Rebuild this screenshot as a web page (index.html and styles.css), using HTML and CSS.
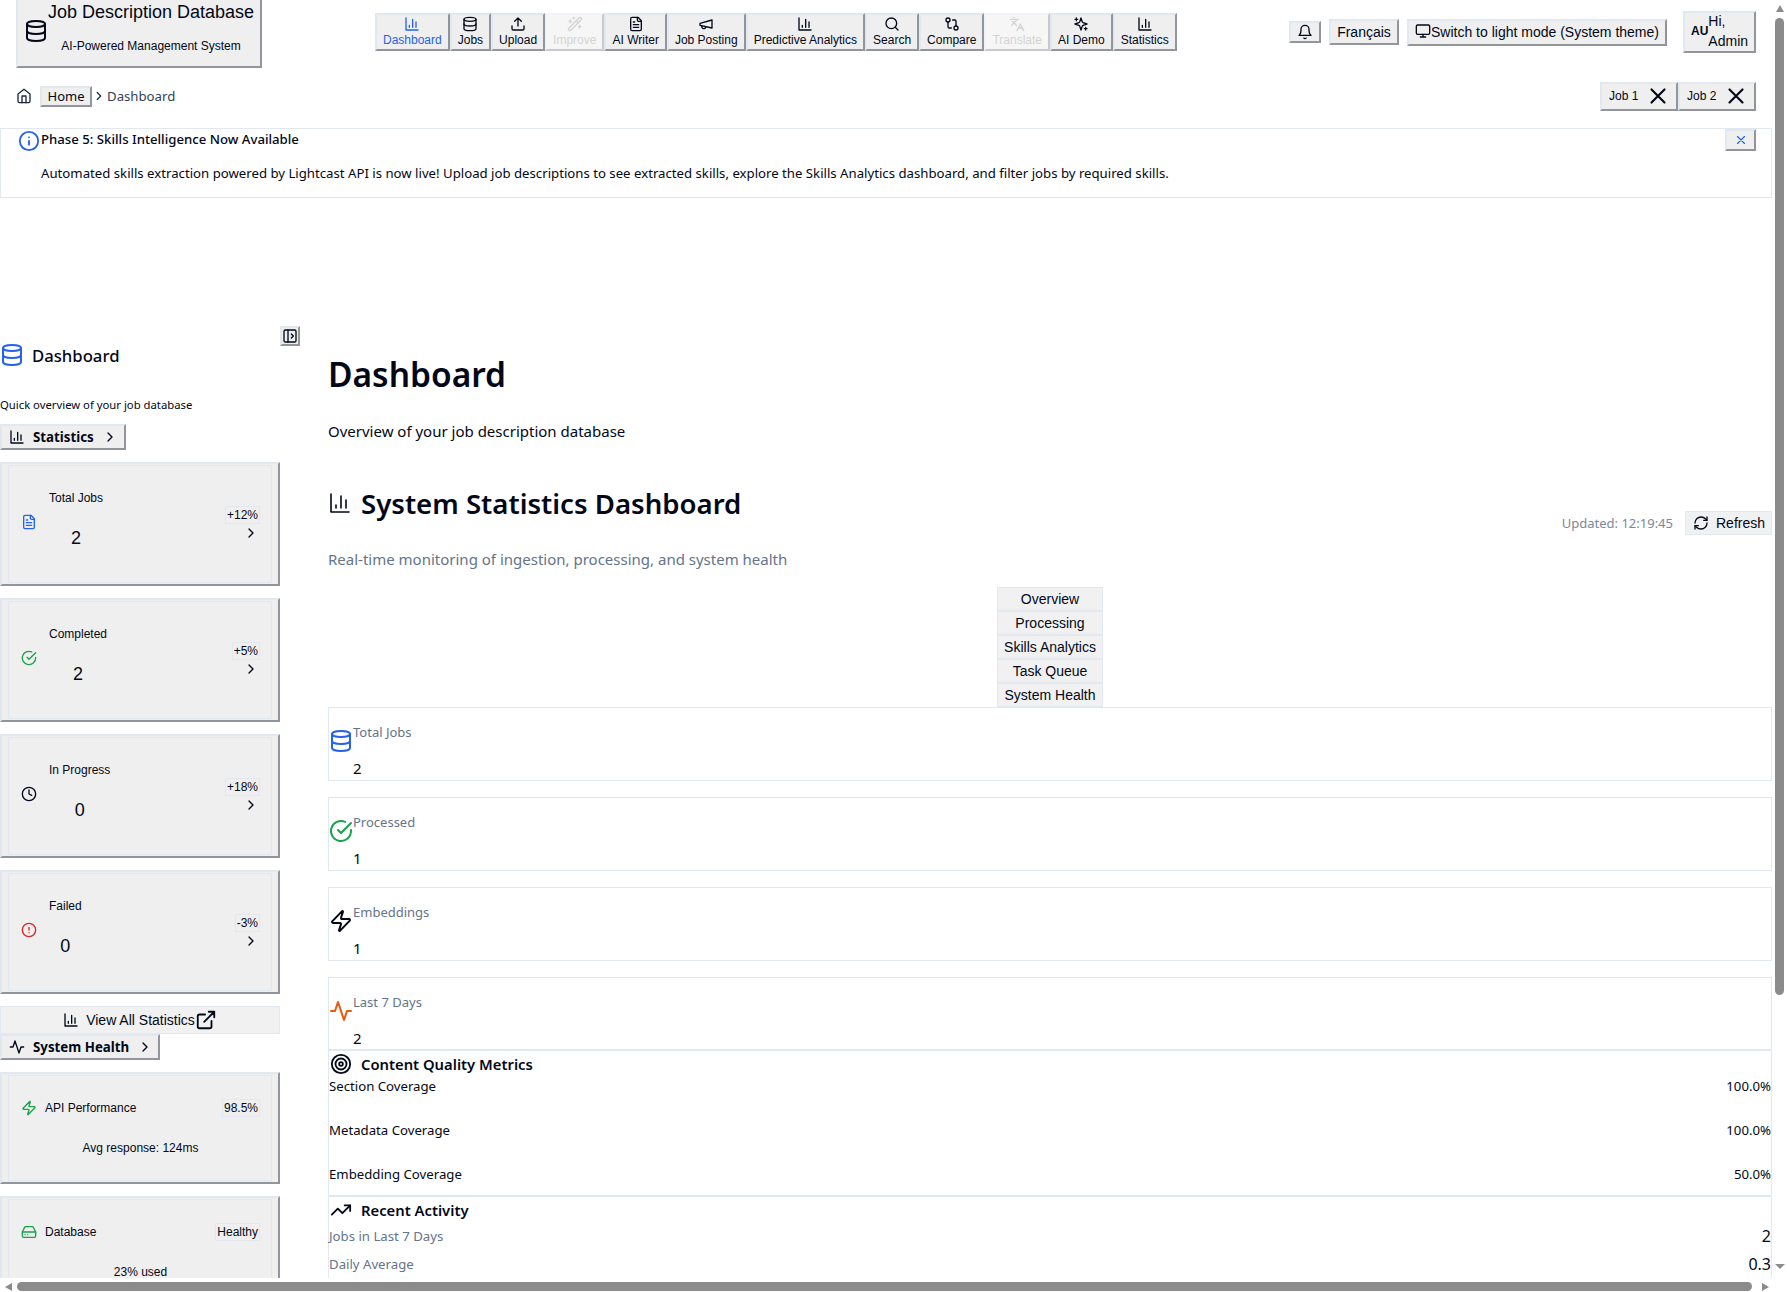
FILE: index.html
```html
<!DOCTYPE html>
<html lang="en">
<head>
    <meta charset="UTF-8">
    <meta name="viewport" content="width=device-width, initial-scale=1.0">
    <title>Job Description Database</title>
    <link rel="stylesheet" href="styles.css">
</head>
<body>
    <!-- icon sprite -->
    <svg class="sprite" xmlns="http://www.w3.org/2000/svg">
        <symbol id="i-chart" viewBox="0 0 24 24"><path d="M3 3v18h18M18 17V9M13 17V5M8 17v-3"/></symbol>
        <symbol id="i-db" viewBox="0 0 24 24"><ellipse cx="12" cy="5" rx="9" ry="3"/><path d="M3 5V19A9 3 0 0 0 21 19V5"/><path d="M3 12A9 3 0 0 0 21 12"/></symbol>
        <symbol id="i-upload" viewBox="0 0 24 24"><path d="M21 15v4a2 2 0 0 1-2 2H5a2 2 0 0 1-2-2v-4"/><path d="M17 8 12 3 7 8M12 3v12"/></symbol>
        <symbol id="i-wand" viewBox="0 0 24 24"><path d="m21.64 3.64-1.28-1.28a1.21 1.21 0 0 0-1.72 0L2.36 18.64a1.21 1.21 0 0 0 0 1.72l1.28 1.28a1.2 1.2 0 0 0 1.72 0L21.64 5.36a1.2 1.2 0 0 0 0-1.72"/><path d="m14 7 3 3M5 6v4M19 14v4M10 2v2M7 8H3M21 16h-4M11 3H9"/></symbol>
        <symbol id="i-file" viewBox="0 0 24 24"><path d="M15 2H6a2 2 0 0 0-2 2v16a2 2 0 0 0 2 2h12a2 2 0 0 0 2-2V7Z"/><path d="M14 2v4a2 2 0 0 0 2 2h4M10 9H8M16 13H8M16 17H8"/></symbol>
        <symbol id="i-megaphone" viewBox="0 0 24 24"><path d="m3 11 18-5v12L3 14v-3z"/><path d="M11.6 16.8a3 3 0 1 1-5.8-1.6"/></symbol>
        <symbol id="i-search" viewBox="0 0 24 24"><circle cx="11" cy="11" r="8"/><path d="m21 21-4.3-4.3"/></symbol>
        <symbol id="i-compare" viewBox="0 0 24 24"><circle cx="18" cy="18" r="3"/><circle cx="6" cy="6" r="3"/><path d="M13 6h3a2 2 0 0 1 2 2v7M11 18H8a2 2 0 0 1-2-2V9"/></symbol>
        <symbol id="i-lang" viewBox="0 0 24 24"><path d="m5 8 6 6M4 14l6-6 2-3M2 5h12M7 2h1M22 22l-5-10-5 10M14 18h6"/></symbol>
        <symbol id="i-sparkles" viewBox="0 0 24 24"><path d="m12 3-1.912 5.813a2 2 0 0 1-1.275 1.275L3 12l5.813 1.912a2 2 0 0 1 1.275 1.275L12 21l1.912-5.813a2 2 0 0 1 1.275-1.275L21 12l-5.813-1.912a2 2 0 0 1-1.275-1.275L12 3Z"/><path d="M5 3v4M19 17v4M3 5h4M17 19h4"/></symbol>
        <symbol id="i-bell" viewBox="0 0 24 24"><path d="M6 8a6 6 0 0 1 12 0c0 7 3 9 3 9H3s3-2 3-9"/><path d="M10.3 21a1.94 1.94 0 0 0 3.4 0"/></symbol>
        <symbol id="i-monitor" viewBox="0 0 24 24"><rect x="2" y="3" width="20" height="14" rx="2"/><path d="M8 21h8M12 17v4"/></symbol>
        <symbol id="i-x" viewBox="0 0 24 24"><path d="M18 6 6 18M6 6l12 12"/></symbol>
        <symbol id="i-home" viewBox="0 0 24 24"><path d="m3 9 9-7 9 7v11a2 2 0 0 1-2 2H5a2 2 0 0 1-2-2z"/><path d="M9 22V12h6v10"/></symbol>
        <symbol id="i-chevron" viewBox="0 0 24 24"><path d="m9 18 6-6-6-6"/></symbol>
        <symbol id="i-info" viewBox="0 0 24 24"><circle cx="12" cy="12" r="10"/><path d="M12 16v-4M12 8h.01"/></symbol>
        <symbol id="i-panel" viewBox="0 0 24 24"><rect x="3" y="3" width="18" height="18" rx="2"/><path d="M9 3v18M14 9l3 3-3 3"/></symbol>
        <symbol id="i-check" viewBox="0 0 24 24"><path d="M22 11.08V12a10 10 0 1 1-5.93-9.14"/><path d="M22 4 12 14.01l-3-3"/></symbol>
        <symbol id="i-clock" viewBox="0 0 24 24"><circle cx="12" cy="12" r="10"/><path d="M12 6v6l4 2"/></symbol>
        <symbol id="i-alert" viewBox="0 0 24 24"><circle cx="12" cy="12" r="10"/><path d="M12 8v4M12 16h.01"/></symbol>
        <symbol id="i-activity" viewBox="0 0 24 24"><path d="M22 12h-4l-3 9L9 3l-3 9H2"/></symbol>
        <symbol id="i-zap" viewBox="0 0 24 24"><path d="M4 14a1 1 0 0 1-.78-1.63l9.9-10.2a.5.5 0 0 1 .86.46l-1.92 6.02A1 1 0 0 0 13 10h7a1 1 0 0 1 .78 1.63l-9.9 10.2a.5.5 0 0 1-.86-.46l1.92-6.02A1 1 0 0 0 11 14z"/></symbol>
        <symbol id="i-external" viewBox="0 0 24 24"><path d="M18 13v6a2 2 0 0 1-2 2H5a2 2 0 0 1-2-2V8a2 2 0 0 1 2-2h6"/><path d="M15 3h6v6M10 14 21 3"/></symbol>
        <symbol id="i-drive" viewBox="0 0 24 24"><path d="M22 12H2"/><path d="M5.45 5.11 2 12v6a2 2 0 0 0 2 2h16a2 2 0 0 0 2-2v-6l-3.45-6.89A2 2 0 0 0 16.76 4H7.24a2 2 0 0 0-1.79 1.11z"/><path d="M6 16h.01M10 16h.01"/></symbol>
        <symbol id="i-target" viewBox="0 0 24 24"><circle cx="12" cy="12" r="10"/><circle cx="12" cy="12" r="6"/><circle cx="12" cy="12" r="2"/></symbol>
        <symbol id="i-trend" viewBox="0 0 24 24"><path d="M22 7l-8.5 8.5-5-5L2 17"/><path d="M16 7h6v6"/></symbol>
        <symbol id="i-refresh" viewBox="0 0 24 24"><path d="M3 12a9 9 0 0 1 9-9 9.75 9.75 0 0 1 6.74 2.74L21 8"/><path d="M21 3v5h-5"/><path d="M21 12a9 9 0 0 1-9 9 9.75 9.75 0 0 1-6.74-2.74L3 16"/><path d="M8 16H3v5"/></symbol>
    </svg>

    <div class="window">
        <div class="viewport">
            <div class="page">
                <header class="topbar">
                    <button class="btn brand">
                        <svg class="icon brand-icon"><use href="#i-db"/></svg>
                        <span class="brand-text">
                            <span class="brand-name">Job Description Database</span>
                            <span class="brand-sub">AI-Powered Management System</span>
                        </span>
                    </button>
                    <nav class="nav">
                        <button class="btn nav-item active"><svg class="icon"><use href="#i-chart"/></svg>Dashboard</button>
                        <button class="btn nav-item"><svg class="icon"><use href="#i-db"/></svg>Jobs</button>
                        <button class="btn nav-item"><svg class="icon"><use href="#i-upload"/></svg>Upload</button>
                        <button class="btn nav-item disabled"><svg class="icon"><use href="#i-wand"/></svg>Improve</button>
                        <button class="btn nav-item"><svg class="icon"><use href="#i-file"/></svg>AI Writer</button>
                        <button class="btn nav-item"><svg class="icon"><use href="#i-megaphone"/></svg>Job Posting</button>
                        <button class="btn nav-item"><svg class="icon"><use href="#i-chart"/></svg>Predictive Analytics</button>
                        <button class="btn nav-item"><svg class="icon"><use href="#i-search"/></svg>Search</button>
                        <button class="btn nav-item"><svg class="icon"><use href="#i-compare"/></svg>Compare</button>
                        <button class="btn nav-item disabled"><svg class="icon"><use href="#i-lang"/></svg>Translate</button>
                        <button class="btn nav-item"><svg class="icon"><use href="#i-sparkles"/></svg>AI Demo</button>
                        <button class="btn nav-item"><svg class="icon"><use href="#i-chart"/></svg>Statistics</button>
                    </nav>
                    <div class="top-actions">
                        <button class="btn bell"><svg class="icon"><use href="#i-bell"/></svg></button>
                        <button class="btn lang">Français</button>
                        <button class="btn theme"><svg class="icon"><use href="#i-monitor"/></svg>Switch to light mode (System theme)</button>
                        <button class="btn user">
                            <span class="user-initials">AU</span>
                            <span class="user-name">Hi,<br>Admin</span>
                        </button>
                    </div>
                </header>

                <div class="crumbs">
                    <svg class="icon crumb-home"><use href="#i-home"/></svg>
                    <button class="btn crumb-link">Home</button>
                    <svg class="icon crumb-sep"><use href="#i-chevron"/></svg>
                    <span class="crumb-current">Dashboard</span>
                    <div class="job-tabs">
                        <button class="btn job-tab">Job 1<svg class="icon"><use href="#i-x"/></svg></button>
                        <button class="btn job-tab">Job 2<svg class="icon"><use href="#i-x"/></svg></button>
                    </div>
                </div>

                <div class="notice">
                    <svg class="icon notice-icon"><use href="#i-info"/></svg>
                    <div class="notice-body">
                        <div class="notice-title">Phase 5: Skills Intelligence Now Available</div>
                        <div class="notice-text">Automated skills extraction powered by Lightcast API is now live! Upload job descriptions to see extracted skills, explore the Skills Analytics dashboard, and filter jobs by required skills.</div>
                    </div>
                    <button class="btn notice-close"><svg class="icon"><use href="#i-x"/></svg></button>
                </div>

                <div class="layout">
                    <aside class="sidebar">
                        <button class="btn side-toggle"><svg class="icon"><use href="#i-panel"/></svg></button>
                        <div class="side-title"><svg class="icon"><use href="#i-db"/></svg>Dashboard</div>
                        <p class="side-desc">Quick overview of your job database</p>

                        <button class="btn side-section"><svg class="icon"><use href="#i-chart"/></svg><b>Statistics</b><svg class="icon chev"><use href="#i-chevron"/></svg></button>
                        <div class="side-cards">
                            <button class="btn side-card">
                                <span class="side-card-in">
                                    <svg class="icon s-icon blue"><use href="#i-file"/></svg>
                                    <span class="s-text"><span class="s-label">Total Jobs</span><span class="s-num">2</span></span>
                                    <span class="s-trend"><span class="badge">+12%</span><svg class="icon"><use href="#i-chevron"/></svg></span>
                                </span>
                            </button>
                            <button class="btn side-card">
                                <span class="side-card-in">
                                    <svg class="icon s-icon green"><use href="#i-check"/></svg>
                                    <span class="s-text"><span class="s-label">Completed</span><span class="s-num">2</span></span>
                                    <span class="s-trend"><span class="badge">+5%</span><svg class="icon"><use href="#i-chevron"/></svg></span>
                                </span>
                            </button>
                            <button class="btn side-card">
                                <span class="side-card-in">
                                    <svg class="icon s-icon"><use href="#i-clock"/></svg>
                                    <span class="s-text"><span class="s-label">In Progress</span><span class="s-num">0</span></span>
                                    <span class="s-trend"><span class="badge">+18%</span><svg class="icon"><use href="#i-chevron"/></svg></span>
                                </span>
                            </button>
                            <button class="btn side-card">
                                <span class="side-card-in">
                                    <svg class="icon s-icon red"><use href="#i-alert"/></svg>
                                    <span class="s-text"><span class="s-label">Failed</span><span class="s-num">0</span></span>
                                    <span class="s-trend"><span class="badge">-3%</span><svg class="icon"><use href="#i-chevron"/></svg></span>
                                </span>
                            </button>
                        </div>
                        <button class="view-all"><svg class="icon"><use href="#i-chart"/></svg><span>View All Statistics</span><svg class="icon ext"><use href="#i-external"/></svg></button>

                        <button class="btn side-section health"><svg class="icon"><use href="#i-activity"/></svg><b>System Health</b><svg class="icon chev"><use href="#i-chevron"/></svg></button>
                        <div class="side-cards">
                            <button class="btn health-card">
                                <span class="health-in">
                                    <span class="health-top">
                                        <svg class="icon s-icon green"><use href="#i-zap"/></svg>
                                        <span class="health-label">API Performance</span>
                                        <span class="badge">98.5%</span>
                                    </span>
                                    <span class="health-note">Avg response: 124ms</span>
                                </span>
                            </button>
                            <button class="btn health-card">
                                <span class="health-in">
                                    <span class="health-top">
                                        <svg class="icon s-icon green"><use href="#i-drive"/></svg>
                                        <span class="health-label">Database</span>
                                        <span class="badge">Healthy</span>
                                    </span>
                                    <span class="health-note">23% used</span>
                                </span>
                            </button>
                        </div>
                    </aside>

                    <main class="main">
                        <h1>Dashboard</h1>
                        <p class="lead">Overview of your job description database</p>

                        <div class="stats-head">
                            <div>
                                <h2><svg class="icon"><use href="#i-chart"/></svg>System Statistics Dashboard</h2>
                                <p class="stats-sub">Real-time monitoring of ingestion, processing, and system health</p>
                            </div>
                            <div class="stats-tools">
                                <span class="updated">Updated: 12:19:45</span>
                                <button class="refresh"><svg class="icon"><use href="#i-refresh"/></svg>Refresh</button>
                            </div>
                        </div>

                        <div class="tabs">
                            <div class="tab">Overview</div>
                            <div class="tab">Processing</div>
                            <div class="tab">Skills Analytics</div>
                            <div class="tab">Task Queue</div>
                            <div class="tab">System Health</div>
                        </div>

                        <div class="stat-list">
                            <div class="stat">
                                <svg class="icon blue"><use href="#i-db"/></svg>
                                <div><div class="stat-label">Total Jobs</div><div class="stat-num">2</div></div>
                            </div>
                            <div class="stat">
                                <svg class="icon green"><use href="#i-check"/></svg>
                                <div><div class="stat-label">Processed</div><div class="stat-num">1</div></div>
                            </div>
                            <div class="stat">
                                <svg class="icon"><use href="#i-zap"/></svg>
                                <div><div class="stat-label">Embeddings</div><div class="stat-num">1</div></div>
                            </div>
                            <div class="stat">
                                <svg class="icon orange"><use href="#i-activity"/></svg>
                                <div><div class="stat-label">Last 7 Days</div><div class="stat-num">2</div></div>
                            </div>
                        </div>

                        <section class="panel quality">
                            <h3><svg class="icon"><use href="#i-target"/></svg>Content Quality Metrics</h3>
                            <div class="metric"><span>Section Coverage</span><span>100.0%</span></div>
                            <div class="metric"><span>Metadata Coverage</span><span>100.0%</span></div>
                            <div class="metric"><span>Embedding Coverage</span><span>50.0%</span></div>
                        </section>
                        <section class="panel recent">
                            <h3><svg class="icon"><use href="#i-trend"/></svg>Recent Activity</h3>
                            <div class="activity"><span>Jobs in Last 7 Days</span><b>2</b></div>
                            <div class="activity"><span>Daily Average</span><b>0.3</b></div>
                        </section>
                    </main>
                </div>
            </div>

            <div class="hbar">
                <span class="arrow left"></span>
                <span class="hthumb"></span>
                <span class="arrow right"></span>
            </div>
        </div>

        <div class="vbar">
            <span class="arrow up"></span>
            <span class="vthumb"></span>
            <span class="arrow down"></span>
        </div>
    </div>
</body>
</html>
```

FILE: styles.css
```css
* {
    box-sizing: border-box;
}
html, body {
    margin: 0;
    height: 100%;
    overflow: hidden;
}
body {
    font-family: "Noto Sans", "Open Sans", sans-serif;
    font-size: 13.2px;
    color: #020817;
    background-color: white;
}
.sprite {
    display: none;
}
.icon {
    width: 16px;
    height: 16px;
    flex: none;
    fill: none;
    stroke: currentColor;
    stroke-width: 2;
    stroke-linecap: round;
    stroke-linejoin: round;
}
.blue { color: #2563eb; }
.green { color: #16a34a; }
.red { color: #dc2626; }
.orange { color: #ea580c; }

/* window + fake scrollbars */
.window {
    display: flex;
    height: 1292px;
}
.viewport {
    width: 1772px;
    display: flex;
    flex-direction: column;
}
.page {
    height: 1278px;
    overflow: hidden;
}
.hbar {
    height: 14px;
    display: flex;
    align-items: center;
    padding-top: 3px;
}
.hthumb {
    width: 1735px;
    height: 9px;
    margin: 0 10px 0 5px;
    background-color: #8b8b8b;
    border-radius: 5px;
}
.vbar {
    width: 15px;
    display: flex;
    flex-direction: column;
    align-items: center;
    padding-top: 5px;
}
.vthumb {
    width: 9px;
    height: 977px;
    margin: 6px 0 269px;
    background-color: #8b8b8b;
    border-radius: 5px;
}
.arrow {
    width: 0;
    height: 0;
    border-style: solid;
    border-color: transparent;
    flex: none;
}
.arrow.up { border-width: 0 4px 7px; border-bottom-color: #8b8b8b; }
.arrow.down { border-width: 5px 5px 0; border-top-color: #8b8b8b; }
.arrow.left { border-width: 4px 7px 4px 0; border-right-color: #8b8b8b; margin-left: 5px; }
.arrow.right { border-width: 4px 0 4px 7px; border-left-color: #8b8b8b; }

/* unstyled browser button look */
.btn {
    font-family: "Liberation Sans", Arial, sans-serif;
    font-size: 12px;
    color: #020817;
    background-color: #efefef;
    border-width: 2px;
    border-style: solid;
    border-color: #e2e8f0 #92969c #92969c #e2e8f0;
    padding: 1px 6px;
    margin: 0;
}

/* top bar */
.topbar {
    height: 68px;
    padding: 0 16px 4px;
    display: flex;
    align-items: center;
}
.brand {
    align-self: flex-start;
    width: 246px;
    height: 84px;
    margin-top: -16px;
    display: flex;
    align-items: center;
    padding: 0 0 0 6px;
}
.brand-icon {
    width: 24px;
    height: 24px;
    margin-top: 9px;
}
.brand-text {
    display: flex;
    flex-direction: column;
    align-items: center;
    white-space: nowrap;
}
.brand-name {
    font-size: 18px;
    line-height: 28px;
}
.brand-sub {
    font-size: 12px;
    line-height: 16px;
    margin-top: 12px;
}
.nav {
    display: flex;
    margin-left: 113px;
}
.nav-item {
    height: 38px;
    display: flex;
    flex-direction: column;
    align-items: center;
    justify-content: center;
    gap: 1px;
    padding-bottom: 3px;
    white-space: nowrap;
}
.nav-item.active {
    color: #2563eb;
}
.nav-item.disabled {
    opacity: 0.5;
    color: #a8a8a8;
}
.top-actions {
    margin-left: auto;
    display: flex;
    align-items: center;
}
.bell {
    width: 32px;
    height: 22px;
    display: flex;
    align-items: center;
    justify-content: center;
    padding: 0;
}
.lang {
    height: 26px;
    width: 70px;
    margin-left: 8px;
    font-size: 14px;
    padding: 0;
}
.theme {
    height: 27px;
    width: 260px;
    margin-left: 8px;
    font-size: 14px;
    display: flex;
    align-items: center;
    justify-content: center;
    padding: 0;
    white-space: nowrap;
}
.theme .icon {
    margin-top: -3px;
}
.user {
    height: 42px;
    width: 73px;
    margin-left: 16px;
    display: flex;
    align-items: center;
    padding: 0 6px 2px;
    text-align: left;
}
.user-initials {
    font-weight: 700;
    font-size: 12px;
}
.user-name {
    font-size: 14px;
    line-height: 20px;
}

/* breadcrumb row */
.crumbs {
    height: 56px;
    margin-bottom: 4px;
    padding: 0 16px;
    display: flex;
    align-items: center;
    color: #334155;
}
.crumb-home {
    color: #1e293b;
    margin-right: 8px;
}
.crumb-link {
    height: 21px;
    width: 52px;
    font-family: "Noto Sans", sans-serif;
    font-size: 13px;
    line-height: 14px;
    padding: 0;
}
.crumb-sep {
    width: 14px;
    height: 14px;
    color: #1e293b;
}
.crumb-current {
    margin-left: 1px;
}
.job-tabs {
    margin-left: auto;
    display: flex;
}
.job-tab {
    height: 29px;
    width: 78px;
    display: flex;
    align-items: center;
    justify-content: space-between;
    padding: 0 5px 0 7px;
}
.job-tab .icon {
    width: 26px;
    height: 26px;
}

/* notice */
.notice {
    height: 70px;
    border: 1px solid #e2e8f0;
    padding-left: 17px;
    display: flex;
}
.notice-icon {
    width: 22px;
    height: 22px;
    margin-top: 1px;
    color: #2563eb;
}
.notice-body {
    margin-left: 1px;
    flex: 1;
}
.notice-title {
    font-weight: 500;
    line-height: 20px;
}
.notice-text {
    margin-top: 14px;
    line-height: 20px;
}
.notice-close {
    width: 31px;
    height: 22px;
    margin-right: 15px;
    color: #2563eb;
    display: flex;
    align-items: center;
    justify-content: center;
    padding: 0;
}
.notice-close .icon {
    width: 14px;
    height: 14px;
}

/* layout */
.layout {
    margin-top: 128px;
    display: flex;
}
.sidebar {
    width: 300px;
    flex: none;
}
.side-toggle {
    display: block;
    width: 20px;
    height: 20px;
    margin-left: 280px;
    padding: 0;
}
.side-toggle .icon {
    display: block;
}
.side-title {
    height: 22px;
    margin-top: -2px;
    display: flex;
    align-items: center;
    gap: 8px;
    font-size: 16.7px;
    font-weight: 500;
}
.side-title .icon {
    width: 24px;
    height: 24px;
    color: #2563eb;
}
.side-desc {
    margin: 31px 0 0;
    font-size: 11.3px;
    line-height: 16px;
}
.side-section {
    height: 26px;
    width: 126px;
    margin-top: 11px;
    display: flex;
    align-items: center;
    padding: 0 0 0 7px;
    font-size: 14px;
}
.side-section b {
    margin-left: 8px;
    font-family: "Noto Sans", sans-serif;
    font-size: 13.3px;
    font-weight: 700;
    white-space: nowrap;
}
.side-section .chev {
    margin-left: 8px;
}
.side-section.health {
    width: 160px;
    margin-top: 0;
}
.side-cards {
    width: 280px;
    margin-top: 12px;
    display: flex;
    flex-direction: column;
    gap: 12px;
}
.side-card {
    height: 124px;
    display: block;
    padding: 1px 6px;
}
.side-card-in {
    height: 100%;
    border: 1px solid #e2e8f0;
    padding: 0 11px 0 12px;
    display: flex;
    align-items: center;
}
.s-icon {
    margin-right: 12px;
    margin-top: -4px;
}
.s-text {
    display: flex;
    flex-direction: column;
    align-items: center;
    padding-bottom: 8px;
}
.s-label {
    font-size: 12px;
    line-height: 16px;
}
.s-num {
    font-size: 18px;
    line-height: 24px;
    margin-top: 20px;
}
.s-trend {
    margin-left: auto;
    display: flex;
    flex-direction: column;
    align-items: flex-end;
    gap: 1px;
    margin-top: -1px;
}
.s-trend .icon {
    display: block;
    margin-right: 1px;
}
.badge {
    border: 1px solid #e2e8f0;
    padding: 0 1px;
    line-height: 16px;
    font-size: 12px;
}
.view-all {
    width: 280px;
    height: 28px;
    margin-top: 12px;
    display: flex;
    align-items: center;
    justify-content: center;
    font-family: "Liberation Sans", sans-serif;
    font-size: 14px;
    color: #020817;
    background-color: #f1f1f1;
    border: 1px solid #e2e8f0;
    padding: 0;
}
.view-all span {
    margin-left: 7px;
}
.view-all .ext {
    width: 22px;
    height: 22px;
}
.health-card {
    height: 112px;
    display: block;
    padding: 1px 6px;
    flex: none;
}
.health-in {
    height: 100%;
    border: 1px solid #e2e8f0;
    padding: 0 11px 0 12px;
    display: flex;
    flex-direction: column;
}
.health-top {
    display: flex;
    align-items: center;
    margin-top: 23px;
}
.health-top .s-icon {
    margin: 0 8px 0 0;
}
.health-top .badge {
    margin-left: auto;
}
.health-note {
    margin-top: 23px;
    text-align: center;
    line-height: 16px;
}

/* main column */
.main {
    flex: 1;
    margin-left: 28px;
    min-width: 0;
}
h1 {
    margin: 28px 0 0;
    font-size: 33.5px;
    line-height: 40px;
    font-weight: 600;
}
.lead {
    margin: 25px 0 0;
    font-size: 15px;
    line-height: 24px;
}
.stats-head {
    margin-top: 42px;
    display: flex;
    align-items: center;
    justify-content: space-between;
}
h2 {
    margin: 0;
    display: flex;
    align-items: center;
    gap: 9px;
    font-size: 27.6px;
    line-height: 36px;
    font-weight: 600;
}
h2 .icon {
    width: 24px;
    height: 24px;
    stroke-width: 1.6;
}
.stats-sub {
    margin: 26px 0 0;
    font-size: 15px;
    line-height: 24px;
    color: #64748b;
}
.stats-tools {
    display: flex;
    align-items: center;
    gap: 12px;
    margin-bottom: 11px;
}
.updated {
    font-size: 13px;
    color: #7c8797;
}
.refresh {
    width: 87px;
    height: 24px;
    display: flex;
    align-items: center;
    gap: 7px;
    padding: 0 0 0 7px;
    font-family: "Liberation Sans", sans-serif;
    font-size: 14px;
    color: #020817;
    background-color: #f0f1f3;
    border: 1px solid #e2e8f0;
}
.tabs {
    width: 106px;
    margin: 16px auto 0;
}
.tab {
    height: 24px;
    line-height: 22px;
    text-align: center;
    font-family: "Liberation Sans", sans-serif;
    font-size: 14px;
    background-color: #f1f1f1;
    border: 1px solid #e2e8f0;
}
.stat-list {
    display: flex;
    flex-direction: column;
    gap: 16px;
}
.stat {
    height: 74px;
    border: 1px solid #e2e8f0;
    display: flex;
}
.stat .icon {
    width: 24px;
    height: 24px;
    margin-top: 21px;
}
.stat-label {
    margin-top: 14px;
    font-size: 13px;
    line-height: 20px;
    color: #64748b;
}
.stat-num {
    margin-top: 14px;
    font-size: 15px;
    line-height: 24px;
}
.panel {
    border: 1px solid #e2e8f0;
    border-top-width: 2px;
    border-bottom: 0;
    padding: 1px 0 0 0;
}
.quality {
    margin-top: -2px;
    height: 146px;
}
h3 {
    margin: 0;
    height: 24px;
    display: flex;
    align-items: center;
    gap: 9px;
    font-size: 14.8px;
    line-height: 24px;
    font-weight: 600;
    padding-left: 1px;
}
h3 .icon {
    width: 22px;
    height: 22px;
}
.metric {
    height: 20px;
    margin-bottom: 24px;
    display: flex;
    justify-content: space-between;
    line-height: 20px;
    white-space: nowrap;
}
.activity {
    height: 28px;
    display: flex;
    justify-content: space-between;
    align-items: center;
    color: #64748b;
}
.activity b {
    font-size: 16px;
    font-weight: 400;
    color: #020817;
}
```
